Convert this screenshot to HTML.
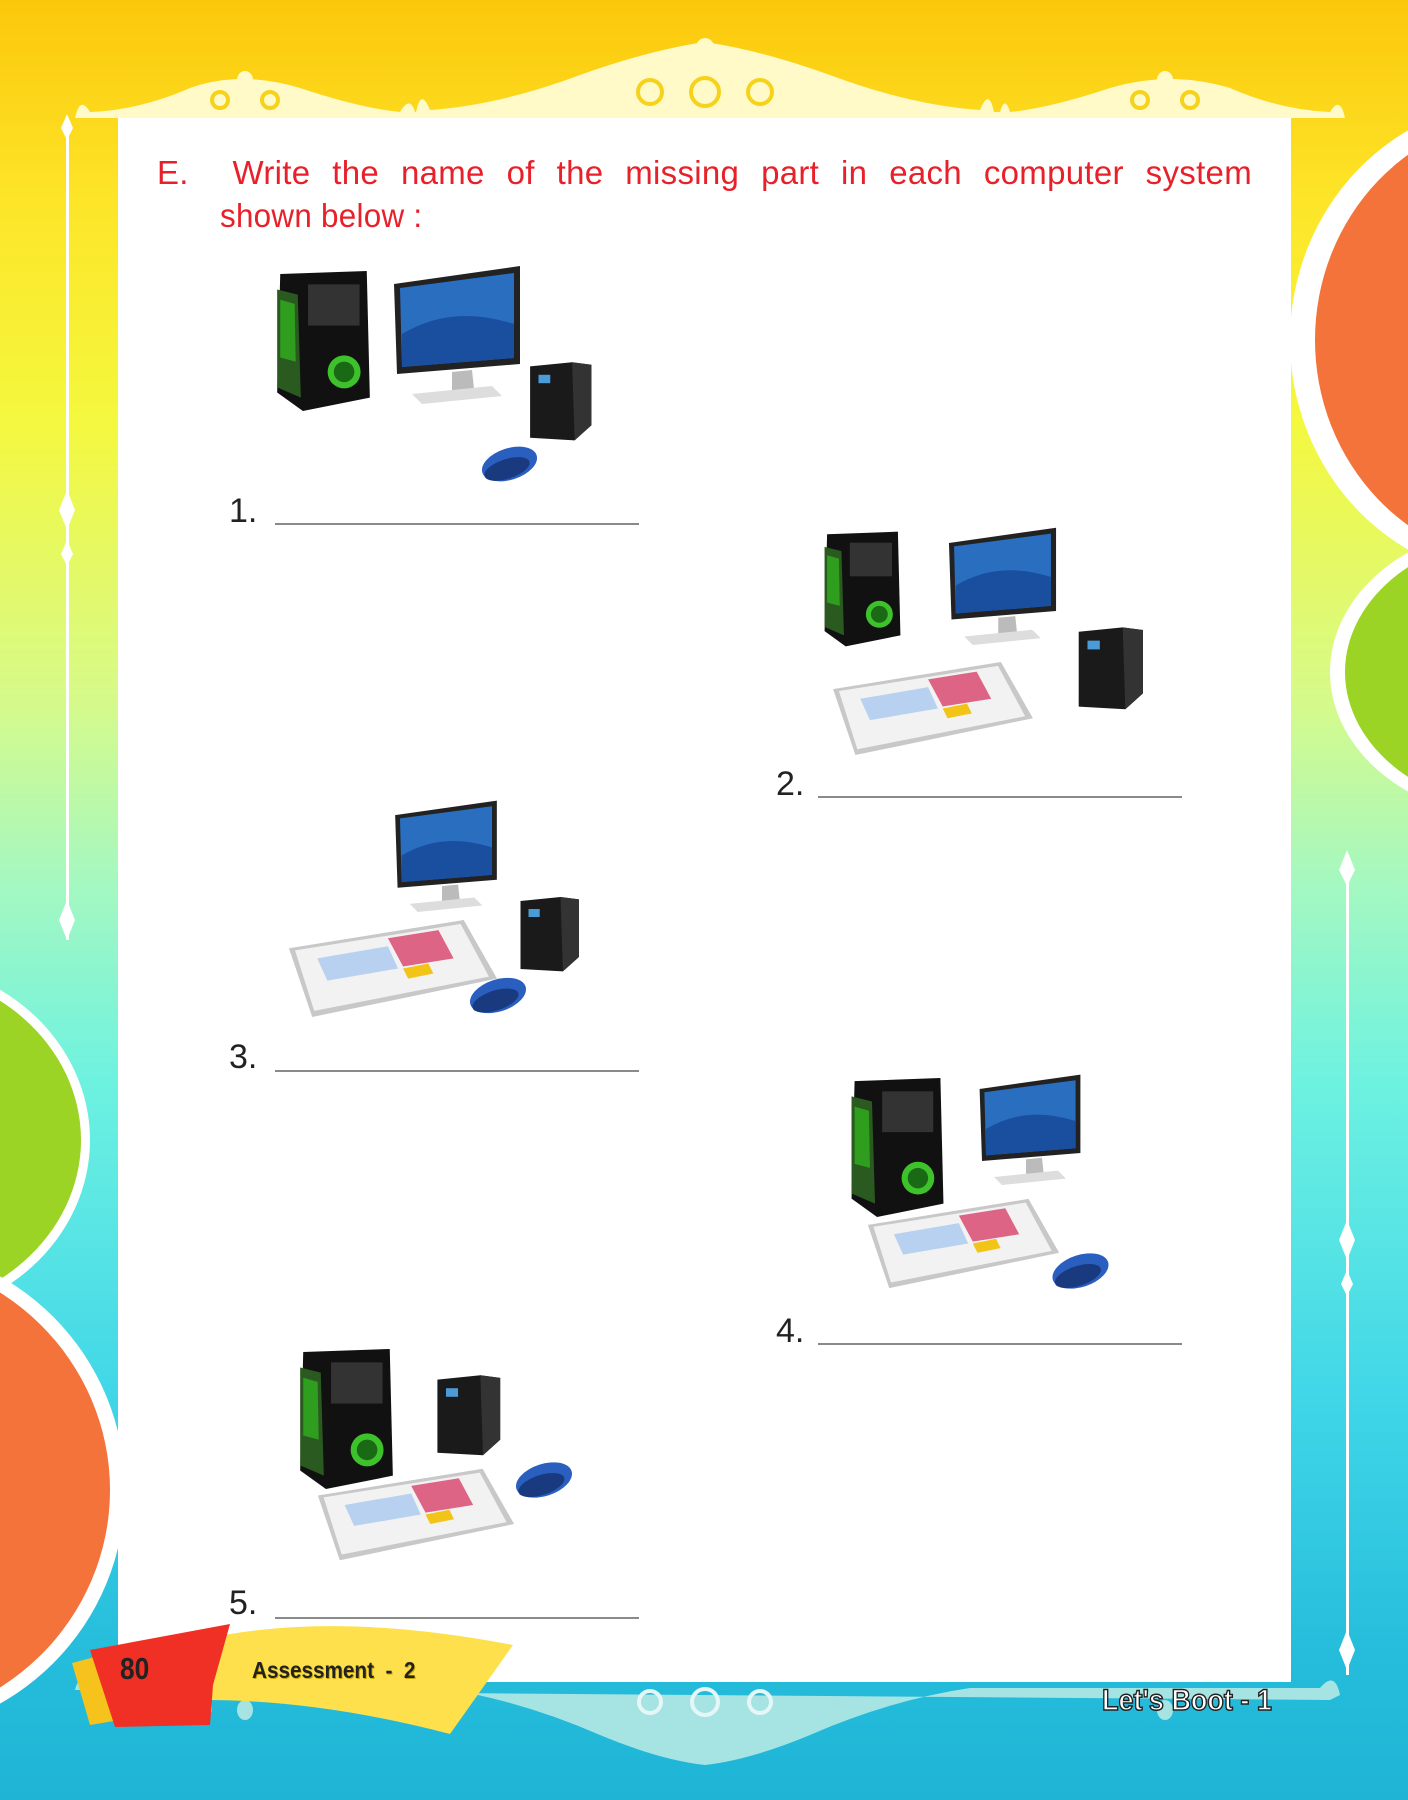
<!DOCTYPE html>
<html><head><meta charset="utf-8"><style>
html,body{margin:0;padding:0}
body{width:1408px;height:1800px;position:relative;overflow:hidden;font-family:"Liberation Sans",sans-serif;
background:linear-gradient(180deg,#fcc70b 0px,#fde528 200px,#f4f83e 420px,#d6fa8a 700px,#a6f8c0 880px,#6ef2e0 1080px,#40d6e8 1400px,#26bddc 1650px,#1fb4d6 1800px);}
.abs{position:absolute}
.panel{left:118px;top:118px;width:1173px;height:1564px;background:#fff}
.t{color:#e8202a;font-size:33px;letter-spacing:0.3px}
.num{font-size:34px;color:#222;font-family:"Liberation Sans",sans-serif}
.ln{height:2px;background:#8a8a8a;width:364px}
svg{position:absolute}
</style></head><body>
<svg width="1408" height="1800" style="left:0;top:0">
 <ellipse cx="1520" cy="340" rx="230" ry="240" fill="#fff"/>
 <ellipse cx="1530" cy="340" rx="215" ry="225" fill="#f3733a"/>
 <ellipse cx="1520" cy="672" rx="190" ry="148" fill="#fff"/>
 <ellipse cx="1525" cy="672" rx="180" ry="138" fill="#9bd424"/>
 <ellipse cx="-110" cy="1140" rx="200" ry="180" fill="#fff"/>
 <ellipse cx="-115" cy="1140" rx="196" ry="172" fill="#9bd424"/>
 <ellipse cx="-120" cy="1490" rx="245" ry="245" fill="#fff"/>
 <ellipse cx="-130" cy="1490" rx="240" ry="235" fill="#f3733a"/>
 <g fill="#fff">
  <rect x="66" y="120" width="3" height="820"/>
  <path d="M67 114 l6 14 -6 12 -6 -12z M67 490 l8 20 -8 20 -8 -20z M67 540 l6 14 -6 12 -6 -12z M67 900 l8 20 -8 20 -8 -20z"/>
  <rect x="1346" y="855" width="3" height="820"/>
  <path d="M1347 850 l8 20 -8 16 -8 -16z M1347 1220 l8 20 -8 20 -8 -20z M1347 1270 l6 14 -6 12 -6 -12z M1347 1630 l8 20 -8 20 -8 -20z"/>
 </g>
 <g fill="#fffac8">
  <path d="M75 118 Q80 95 90 112 Q140 110 190 88 Q240 70 300 88 Q360 108 400 112 Q410 95 415 112 L1000 112 Q1005 95 1010 112 Q1050 108 1110 88 Q1170 70 1230 88 Q1280 110 1330 112 Q1340 95 1345 118Z"/>
  <path d="M415 118 Q420 85 430 110 Q500 105 580 75 Q650 50 705 42 Q760 50 830 75 Q910 105 980 110 Q990 85 995 118Z"/>
  <ellipse cx="705" cy="50" rx="10" ry="12"/><ellipse cx="245" cy="80" rx="8" ry="9"/><ellipse cx="1165" cy="80" rx="8" ry="9"/>
 </g>
 <g fill="none" stroke="#f7d21a" stroke-width="4">
  <circle cx="650" cy="92" r="12"/><circle cx="705" cy="92" r="14"/><circle cx="760" cy="92" r="12"/>
  <circle cx="220" cy="100" r="8"/><circle cx="270" cy="100" r="8"/><circle cx="1140" cy="100" r="8"/><circle cx="1190" cy="100" r="8"/>
 </g>
 <g fill="#a6e4e4">
  <path d="M75 1690 Q80 1670 90 1688 L440 1688 Q520 1700 600 1735 Q660 1760 705 1765 Q750 1760 810 1735 Q890 1700 970 1688 L1320 1688 Q1335 1670 1340 1695 L1330 1700 Z"/>
  <ellipse cx="705" cy="1745" rx="12" ry="16"/><ellipse cx="245" cy="1710" rx="8" ry="10"/><ellipse cx="1165" cy="1710" rx="8" ry="10"/>
 </g>
</svg>
<div class="abs panel"></div>
<svg width="1408" height="1800" style="left:0;top:0">
 <g fill="none" stroke="#e6f6f6" stroke-width="4">
  <circle cx="650" cy="1702" r="11"/><circle cx="705" cy="1702" r="13"/><circle cx="760" cy="1702" r="11"/>
 </g>
</svg>
<div class="abs t" style="left:157px;top:154px;width:1095px;text-align:justify;text-align-last:justify">E.&nbsp; Write the name of the missing part in each computer system</div>
<div class="abs t" style="left:220px;top:197px;transform:scaleX(0.95);transform-origin:0 0">shown below :</div>

<svg width="0" height="0" style="position:absolute">
<defs>
 <symbol id="tower" viewBox="0 0 100 140"><path d="M8 5 L92 2 L95 125 L30 138 L5 120 Z" fill="#111"/><path d="M5 20 L25 25 L28 125 L5 115Z" fill="#2a5a20"/><path d="M8 30 L22 34 L23 90 L8 86Z" fill="#2f9e1f"/><circle cx="70" cy="100" r="16" fill="#3ec22c"/><circle cx="70" cy="100" r="10" fill="#1a6a15"/><rect x="35" y="15" width="50" height="40" fill="#333"/></symbol>
 <symbol id="mon" viewBox="0 0 130 140"><path d="M2 20 L128 2 L128 100 L5 110Z" fill="#222"/><path d="M8 24 L122 9 L122 94 L10 103Z" fill="#2a6ec0"/><path d="M10 70 Q60 40 122 60 L122 94 L10 103Z" fill="#1a4fa0"/><path d="M60 108 L80 106 L82 125 L60 127Z" fill="#bbb"/><path d="M20 130 L100 122 L110 132 L30 140Z" fill="#ddd"/></symbol>
 <symbol id="ups" viewBox="0 0 80 100"><path d="M5 10 L55 5 L78 8 L78 80 L58 98 L5 95Z" fill="#1a1a1a"/><path d="M55 5 L78 8 L78 80 L58 98Z" fill="#333"/><rect x="15" y="20" width="14" height="10" fill="#4a9bd8"/></symbol>
 <symbol id="kb" viewBox="0 0 210 100"><path d="M2 30 L175 2 L208 60 L25 98Z" fill="#c8c8c8"/><path d="M8 32 L172 6 L200 58 L27 92Z" fill="#f2f2f2"/><path d="M100 20 L150 12 L165 40 L115 48Z" fill="#d8406a" opacity=".8"/><path d="M30 40 L100 28 L110 50 L40 62Z" fill="#a9c8ef" opacity=".8"/><path d="M115 50 L140 45 L145 55 L120 60Z" fill="#f2c418"/></symbol>
 <symbol id="mouse" viewBox="0 0 60 40"><ellipse cx="30" cy="20" rx="29" ry="16" fill="#2a5fc0" transform="rotate(-18 30 20)"/><ellipse cx="26" cy="24" rx="24" ry="10" fill="#1a3a80" transform="rotate(-18 30 20)"/></symbol>
</defs></svg>

<svg style="left:272px;top:267px" width="103" height="148"><use href="#tower"/></svg>
<svg style="left:390px;top:264px" width="134" height="140"><use href="#mon"/></svg>
<svg style="left:522px;top:358px" width="75" height="84"><use href="#ups"/></svg>
<svg style="left:480px;top:444px" width="59" height="40"><use href="#mouse"/></svg>
<div class="abs num" style="left:229px;top:492px">1.</div><div class="abs ln" style="left:275px;top:523px"></div>
<svg style="left:809px;top:530px" width="107" height="118"><use href="#tower"/></svg>
<svg style="left:932px;top:526px" width="141" height="119"><use href="#mon"/></svg>
<svg style="left:1069px;top:623px" width="81" height="88"><use href="#ups"/></svg>
<svg style="left:828px;top:660px" width="210" height="97"><use href="#kb"/></svg>
<div class="abs num" style="left:776px;top:765px">2.</div><div class="abs ln" style="left:818px;top:796px"></div>
<svg style="left:379px;top:799px" width="134" height="113"><use href="#mon"/></svg>
<svg style="left:512px;top:893px" width="73" height="80"><use href="#ups"/></svg>
<svg style="left:281px;top:918px" width="224" height="101"><use href="#kb"/></svg>
<svg style="left:468px;top:975px" width="60" height="41"><use href="#mouse"/></svg>
<div class="abs num" style="left:229px;top:1038px">3.</div><div class="abs ln" style="left:275px;top:1070px"></div>
<svg style="left:846px;top:1076px" width="103" height="143"><use href="#tower"/></svg>
<svg style="left:964px;top:1073px" width="132" height="112"><use href="#mon"/></svg>
<svg style="left:866px;top:1193px" width="195" height="101"><use href="#kb"/></svg>
<svg style="left:1050px;top:1251px" width="61" height="40"><use href="#mouse"/></svg>
<div class="abs num" style="left:776px;top:1312px">4.</div><div class="abs ln" style="left:818px;top:1343px"></div>
<svg style="left:295px;top:1346px" width="103" height="146"><use href="#tower"/></svg>
<svg style="left:430px;top:1371px" width="75" height="86"><use href="#ups"/></svg>
<svg style="left:316px;top:1463px" width="200" height="103"><use href="#kb"/></svg>
<svg style="left:514px;top:1457px" width="60" height="46"><use href="#mouse"/></svg>
<div class="abs num" style="left:229px;top:1584px">5.</div><div class="abs ln" style="left:275px;top:1617px"></div>

<svg width="1408" height="1800" style="left:0;top:0">
 <path d="M72 1663 L110 1653 L120 1720 L90 1725Z" fill="#f6c21c"/>
 <path d="M200 1640 Q330 1610 513 1645 L450 1734 Q320 1700 205 1700 L196 1670Z" fill="#fde04c"/>
 <path d="M208 1632 L200 1700 L212 1712Z" fill="#f6b818"/>
 <path d="M90 1650 L230 1624 L213 1685 L210 1725 L115 1727Z" fill="#f03024"/>
</svg>
<div class="abs" style="left:120px;top:1651px;font:bold 31px 'Liberation Sans',sans-serif;color:#222;transform:scaleX(0.85);transform-origin:0 0">80</div>
<div class="abs" style="left:252px;top:1657px;font:bold 23px 'Liberation Sans',sans-serif;color:#222;text-shadow:1px 1px 0 #c9a400;transform:scaleX(0.9);transform-origin:0 0">Assessment&nbsp; - &nbsp;2</div>
<div class="abs" style="left:1102px;top:1684px;font:bold 30px 'Liberation Sans',sans-serif;color:#fff;-webkit-text-stroke:1.5px #222;transform:scaleX(0.9);transform-origin:0 0">Let's Boot - 1</div>
</body></html>
